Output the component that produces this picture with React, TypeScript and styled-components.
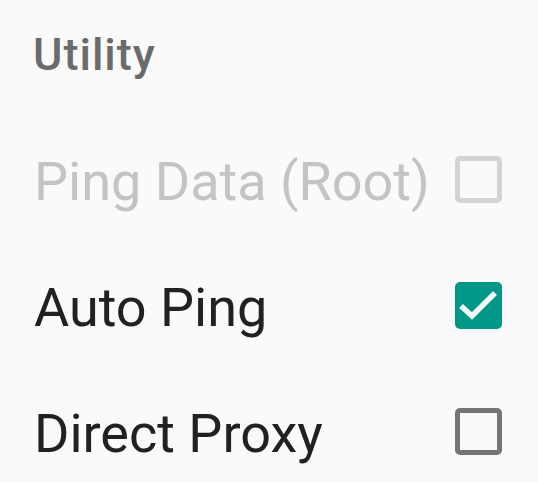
import React from "react";
import styled, { createGlobalStyle } from "styled-components";

const Global = createGlobalStyle`
  html, body { margin: 0; padding: 0; background: #fafafa; }
  body { font-family: Roboto, "Noto Sans", sans-serif; }
`;

const Screen = styled.div`
  width: 538px;
  height: 482px;
  background: #fafafa;
  overflow: hidden;
  display: flex;
  flex-direction: column;
`;

const Header = styled.div`
  flex: none;
  height: 116px;
  padding-left: 33px;
  display: flex;
  align-items: flex-start;
`;

const HeaderText = styled.h2`
  margin: 0;
  margin-top: 29px;
  font-size: 45px;
  line-height: 52px;
  font-weight: 500;
  letter-spacing: 1px;
  color: #6b6b6b;
`;

const Row = styled.div`
  flex: none;
  height: 126px;
  display: flex;
  align-items: center;
  padding-left: 34px;
  padding-right: 36px;
  gap: 12px;
`;

const Label = styled.span<{ $disabled?: boolean }>`
  flex: 1;
  font-size: 54px;
  line-height: 60px;
  padding-top: 5px;
  color: ${(p) => (p.$disabled ? "#c4c4c4" : "#212121")};
  white-space: nowrap;
`;

const Box = styled.div<{ $checked?: boolean; $disabled?: boolean }>`
  width: 47px;
  height: 47px;
  box-sizing: border-box;
  border-radius: 5px;
  flex: none;
  display: flex;
  align-items: center;
  justify-content: center;
  background: ${(p) => (p.$checked ? "#009688" : "transparent")};
  border: ${(p) =>
    p.$checked ? "none" : `5px solid ${p.$disabled ? "#d4d4d4" : "#757575"}`};
`;

const Check = () => (
  <svg width="47" height="47" viewBox="0 0 47 47">
    <path d="M6 24 L17 34 L40 11" fill="none" stroke="#f2fbfa" strokeWidth="5.5" />
  </svg>
);

const items = [
  { label: "Ping Data (Root)", disabled: true, checked: false },
  { label: "Auto Ping", disabled: false, checked: true },
  { label: "Direct Proxy", disabled: false, checked: false },
];

export default function App() {
  return (
    <Screen>
      <Global />
      <Header>
        <HeaderText>Utility</HeaderText>
      </Header>
      {items.map((it) => (
        <Row key={it.label}>
          <Label $disabled={it.disabled}>{it.label}</Label>
          <Box $checked={it.checked} $disabled={it.disabled}>
            {it.checked && <Check />}
          </Box>
        </Row>
      ))}
    </Screen>
  );
}
